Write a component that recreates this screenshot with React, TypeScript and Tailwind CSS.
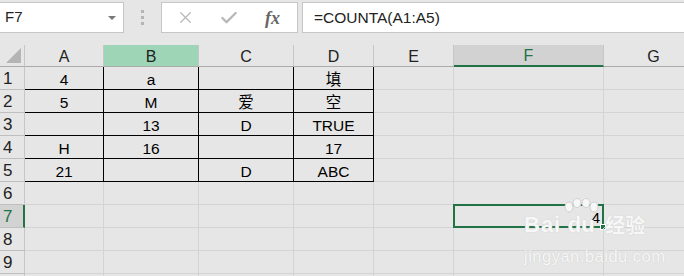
import { Check, X } from 'lucide-react';

const colWidths = ['w-[79px]', 'w-[95px]', 'w-[95px]', 'w-[80px]', 'w-[80px]', 'w-[150px]', 'w-[100px]'];
const cols = ['A', 'B', 'C', 'D', 'E', 'F', 'G'];

const data: Record<number, string[]> = {
  1: ['4', 'a', '', '填'],
  2: ['5', 'M', '爱', '空'],
  3: ['', '13', 'D', 'TRUE'],
  4: ['H', '16', '', '17'],
  5: ['21', '', 'D', 'ABC'],
};

const rows = [1, 2, 3, 4, 5, 6, 7, 8, 9, 10];

const headerCell = (col: string, i: number) => {
  let tone = 'bg-[#e6e6e6] text-[#222] border-b-[#ababab]';
  if (col === 'B') tone = 'bg-[#9fd5b7] text-[#222] border-b-[#ababab]';
  if (col === 'F') tone = 'bg-[#d2d2d2] text-[#217346] border-b-2 border-b-[#217346]';
  return (
    <div
      key={col}
      className={`${colWidths[i]} shrink-0 h-[22px] border-r border-b border-r-[#c6c6c6] flex items-end justify-center text-[16px] leading-[18px] ${tone}`}
    >
      {col}
    </div>
  );
};

const Cell = ({ row, ci }: { row: number; ci: number }) => {
  const inTable = row <= 5 && ci <= 3;
  const value = data[row]?.[ci] ?? '';
  const selected = row === 7 && ci === 5;
  return (
    <div
      className={`${colWidths[ci]} shrink-0 h-[23px] relative border-r border-b flex items-end text-[15.5px] leading-[18px] text-black ${
        inTable ? 'border-black justify-center' : 'border-[#d4d4d4]'
      } ${selected ? 'justify-end pr-[3px]' : ''}`}
    >
      {selected ? '4' : value}
      {selected && (
        <>
          <div className="absolute -left-[1px] -top-[1px] -right-[1px] -bottom-[1px] border-2 border-[#217346]" />
          <div className="absolute -right-[3px] -bottom-[3px] w-[6px] h-[6px] bg-[#217346] border border-white" />
        </>
      )}
    </div>
  );
};

export default function App() {
  return (
    <div
      className="w-[684px] h-[276px] overflow-hidden relative bg-[#e6e6e6] text-black select-none"
      style={{ fontFamily: '"Liberation Sans", "Noto Sans CJK SC", sans-serif' }}
    >
      {/* formula bar */}
      <div className="h-[45px] flex items-start pt-[2px]">
        <div className="w-[124px] h-[31px] bg-white border border-[#c6c6c6] border-l-0 flex items-center pl-[5px] pr-[7px] text-[15px] text-[#222]">
          <span className="flex-1">F7</span>
          <span className="w-0 h-0 border-l-[4px] border-r-[4px] border-t-[4px] border-l-transparent border-r-transparent border-t-[#777]" />
        </div>
        <div className="w-[37px] h-[31px] flex flex-col items-center justify-center gap-[3px]">
          <span className="w-[3px] h-[3px] bg-[#b4b4b4]" />
          <span className="w-[3px] h-[3px] bg-[#b4b4b4]" />
          <span className="w-[3px] h-[3px] bg-[#b4b4b4]" />
        </div>
        <div className="w-[137px] h-[31px] bg-white border border-[#c6c6c6] flex items-center pl-[14px]">
          <X size={19} strokeWidth={1.6} className="text-[#b8b8b8]" />
          <Check size={20} strokeWidth={2.8} className="text-[#b8b8b8] ml-[24px]" />
          <span
            className="ml-[26px] text-[18px] italic font-bold text-[#666] leading-none"
            style={{ fontFamily: '"Liberation Serif", serif' }}
          >
            fx
          </span>
        </div>
        <div className="ml-[4px] flex-1 h-[31px] bg-white border border-[#c6c6c6] border-r-0 flex items-center pl-[11px] text-[15.5px] text-[#222]">
          =COUNTA(A1:A5)
        </div>
      </div>

      {/* column headers */}
      <div className="flex">
        <div className="w-[25px] shrink-0 h-[22px] border-r border-b border-r-[#c6c6c6] border-b-[#ababab] bg-[#e6e6e6] flex items-end justify-end pr-[3px] pb-[3px]">
          <span className="w-0 h-0 border-l-[15px] border-t-[15px] border-l-transparent border-t-transparent border-r-0 border-b-0 [border-bottom:15px_solid_#b4b4b4]" />
        </div>
        {cols.map((c, i) => headerCell(c, i))}
      </div>

      {/* rows */}
      {rows.map((r) => (
        <div key={r} className="flex">
          <div
            className={`w-[25px] shrink-0 h-[23px] border-b border-b-[#bfbfbf] flex items-end pl-[3px] text-[17px] leading-[20px] ${
              r === 7
                ? 'bg-[#d2d2d2] border-r-2 border-r-[#217346] text-[#217346]'
                : 'bg-[#e6e6e6] border-r border-r-[#c6c6c6] text-[#222]'
            }`}
          >
            {r < 10 ? r : ''}
          </div>
          {cols.map((_, ci) => (
            <Cell key={ci} row={r} ci={ci} />
          ))}
        </div>
      ))}

      {/* watermark */}
      <div className="absolute left-[524px] top-[198px] pointer-events-none text-[#f7f7f7] [text-shadow:0_0_1px_#cfcfcf,0_0_1px_#cfcfcf]">
        <div className="flex items-end leading-none">
          <span className="text-[22px] font-bold tracking-[1px]">Bai</span>
          <span className="flex flex-col items-center">
            <svg width="40" height="18" viewBox="0 0 40 18" className="mb-[-2px]">
              <g fill="#f7f7f7" stroke="#d0d0d0" strokeWidth="1">
                <ellipse cx="8" cy="9" rx="4" ry="5" />
                <ellipse cx="16" cy="5" rx="4" ry="4.5" />
                <ellipse cx="25" cy="5" rx="4" ry="4.5" />
                <ellipse cx="33" cy="9" rx="4" ry="5" />
              </g>
            </svg>
            <span className="text-[22px] font-bold">du</span>
          </span>
          <span className="text-[20px] font-bold ml-[4px]">经验</span>
        </div>
        <div className="text-[16.5px] mt-[8px] tracking-[0.5px]">jingyan.baidu.com</div>
      </div>
    </div>
  );
}
